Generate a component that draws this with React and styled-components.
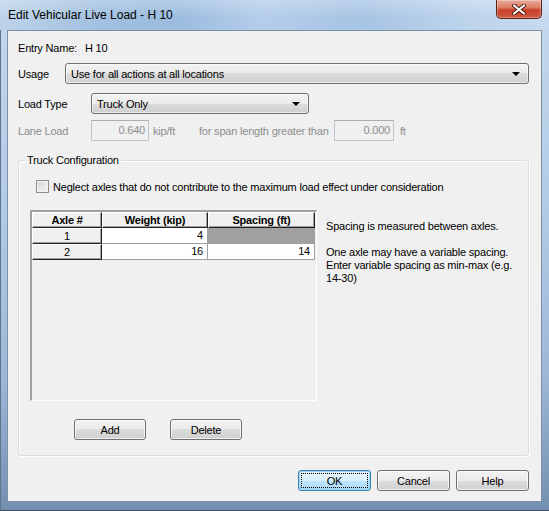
import React from "react";
import styled, { createGlobalStyle } from "styled-components";

const GlobalStyle = createGlobalStyle`
  html, body {
    margin: 0;
    padding: 0;
  }
  body {
    width: 549px;
    height: 511px;
    overflow: hidden;
    background: #ffffff;
    font-family: "Liberation Sans", Arial, sans-serif;
    font-size: 11px;
    letter-spacing: -0.2px;
    color: #000;
  }
`;

const Frame = styled.div`
  width: 549px;
  height: 511px;
  box-sizing: border-box;
  display: flex;
  flex-direction: column;
  padding: 0 7px 8px 7px;
  border-bottom: 1px solid #3e4e62;
  background: linear-gradient(to bottom, #c4d8ee 0%, #b2cbe6 40%, #9cb7d6 75%, #7390b1 100%);
  box-shadow: inset 1px 0 0 #5f7590;
`;

const TitleBar = styled.div`
  height: 30px;
  flex: none;
  display: flex;
  justify-content: space-between;
  align-items: flex-start;
  margin: 0 -7px;
  padding: 0 7px 0 7px;
  background:
    linear-gradient(to bottom, rgba(255, 255, 255, 0.25), rgba(255, 255, 255, 0) 60%),
    linear-gradient(to right, #bdd3ea 0%, #a2c0e0 18%, #9bbcde 32%, #b4cdea 48%, #a6c4e3 66%, #bcd3ec 84%, #c6daef 100%);
`;

const Caption = styled.div`
  font-size: 12px;
  letter-spacing: 0;
  line-height: 16px;
  padding-top: 7px;
  padding-left: 1px;
  color: #000;
`;

const CloseButton = styled.div`
  width: 46px;
  height: 19px;
  box-sizing: border-box;
  border: 1px solid #5e2116;
  border-top: none;
  border-radius: 0 0 5px 5px;
  background: linear-gradient(to bottom, #e9ab9b 0%, #dc7c63 42%, #c7402a 56%, #cf5a3e 100%);
  box-shadow: inset 0 0 0 1px rgba(255, 255, 255, 0.3);
  display: flex;
  align-items: center;
  justify-content: center;
`;

const Client = styled.div`
  flex: 1;
  display: flex;
  flex-direction: column;
  background: #f0f0f0;
  border: 1px solid #7d8fa3;
  padding: 10px 12px 0 10px;
`;

const Row = styled.div`
  display: flex;
  align-items: center;
  height: ${(p) => p.h || 21}px;
  margin-top: ${(p) => p.mt || 0}px;
  color: ${(p) => (p.disabled ? "#8d8d8d" : "#000")};
`;

const Label = styled.div`
  width: ${(p) => p.w}px;
  flex: none;
  white-space: nowrap;
`;

const Combo = styled.div`
  width: ${(p) => p.w}px;
  height: 21px;
  box-sizing: border-box;
  display: flex;
  align-items: center;
  justify-content: space-between;
  padding: 0 8px 0 5px;
  border: 1px solid #707070;
  border-radius: 3px;
  background: linear-gradient(to bottom, #f2f2f2 0%, #ebebeb 50%, #dddddd 50%, #cfcfcf 100%);
  box-shadow: inset 0 0 0 1px rgba(255, 255, 255, 0.6);
`;

const Arrow = styled.span`
  width: 0;
  height: 0;
  border-left: 4px solid transparent;
  border-right: 4px solid transparent;
  border-top: 4px solid #000;
  margin-top: 1px;
`;

const NumBox = styled.div`
  width: ${(p) => p.w}px;
  height: 21px;
  flex: none;
  box-sizing: border-box;
  border: 1px solid #c2c5c9;
  border-top-color: #abadb3;
  background: #f0f0f0;
  text-align: right;
  padding-right: 3px;
  line-height: 19px;
`;

const Unit = styled.div`
  width: ${(p) => p.w}px;
  flex: none;
  padding-left: ${(p) => p.pl || 0}px;
  box-sizing: border-box;
  white-space: nowrap;
`;

const Group = styled.fieldset`
  margin: 13px 0 0 0;
  padding: 0 11px 16px 11px;
  border: 1px solid #d5dfe5;
  border-radius: 3px;
  box-shadow: inset 1px 1px 0 #ffffff, 1px 1px 0 #ffffff;
  height: 302px;
  box-sizing: border-box;
  display: flex;
  flex-direction: column;
`;

const Legend = styled.legend`
  padding: 0 2px;
  margin-left: -5px;
  line-height: 13px;
`;

const CheckRow = styled.label`
  display: flex;
  align-items: center;
  gap: 4px;
  margin: 13px 0 0 6px;
  height: 13px;
`;

const CheckBox = styled.span`
  width: 13px;
  height: 13px;
  box-sizing: border-box;
  border: 1px solid #8f8f8f;
  background: linear-gradient(135deg, #d8d8d8 0%, #f4f4f4 100%);
  box-shadow: inset 0 0 0 1px #f4f4f4;
`;

const Middle = styled.div`
  display: flex;
  gap: 9px;
  margin-top: 17px;
`;

const Grid = styled.div`
  width: 287px;
  height: 191px;
  flex: none;
  box-sizing: border-box;
  border-style: solid;
  border-width: 2px 1px 1px 2px;
  border-color: #a0a0a0 #ffffff #ffffff #a0a0a0;
  background: #f0f0f0;
  display: grid;
  grid-template-columns: 70px 106px 107px;
  grid-auto-rows: 16px;
  align-content: start;
`;

const HeadCell = styled.div`
  box-sizing: border-box;
  border: 1px solid;
  border-color: #ffffff #202020 #202020 #ffffff;
  box-shadow: inset -1px -1px 0 #a0a0a0;
  background: #f0f0f0;
  text-align: center;
  line-height: 14px;
  font-weight: ${(p) => (p.bold ? "bold" : "normal")};
`;

const DataCell = styled.div`
  box-sizing: border-box;
  border-right: 1px solid #a0a0a0;
  border-bottom: 1px solid #a0a0a0;
  background: ${(p) => (p.blank ? "#a0a0a0" : "#ffffff")};
  text-align: right;
  padding-right: 4px;
  line-height: 15px;
`;

const Notes = styled.div`
  padding-top: 10px;
  line-height: 13px;
  white-space: nowrap;
`;

const Para = styled.p`
  margin: 0 0 13px 0;
`;

const ButtonRow = styled.div`
  display: flex;
  gap: ${(p) => p.gap}px;
  justify-content: ${(p) => p.justify || "flex-start"};
  margin: ${(p) => p.m};
`;

const Button = styled.div`
  width: ${(p) => p.w}px;
  height: 21px;
  box-sizing: border-box;
  position: relative;
  border: 1px solid ${(p) => (p.primary ? "#3c7fb1" : "#707070")};
  border-radius: 3px;
  background: ${(p) =>
    p.primary
      ? "linear-gradient(to bottom, #eaf6fd 0%, #d9f0fc 50%, #bee6fd 50%, #a7d9f5 100%)"
      : "linear-gradient(to bottom, #f2f2f2 0%, #ebebeb 50%, #dddddd 50%, #cfcfcf 100%)"};
  box-shadow: inset 0 0 0 1px ${(p) => (p.primary ? "#9fd6f5" : "rgba(255,255,255,0.7)")};
  display: flex;
  align-items: center;
  justify-content: center;
`;

const FocusRing = styled.span`
  position: absolute;
  inset: 2px;
  border: 1px dotted #000;
`;

const Filler = styled.div`
  flex: 1;
`;

const CloseIcon = () => (
  <svg width="14" height="11" viewBox="0 0 14 11">
    <path d="M2 1.5 L12 9.5 M12 1.5 L2 9.5" stroke="#4a1a12" strokeWidth="4" strokeLinecap="round" />
    <path d="M2 1.5 L12 9.5 M12 1.5 L2 9.5" stroke="#ffffff" strokeWidth="2.2" strokeLinecap="round" />
  </svg>
);

const axles = [
  { axle: 1, weight: 4, spacing: null },
  { axle: 2, weight: 16, spacing: 14 },
];

export default function App() {
  return (
    <>
      <GlobalStyle />
      <Frame>
        <TitleBar>
          <Caption>Edit Vehicular Live Load - H 10</Caption>
          <CloseButton>
            <CloseIcon />
          </CloseButton>
        </TitleBar>
        <Client>
          <Row h={13}>
            <Label w={67}>Entry Name:</Label>
            <span>H 10</span>
          </Row>
          <Row mt={9}>
            <Label w={47}>Usage</Label>
            <Combo w={465}>
              <span>Use for all actions at all locations</span>
              <Arrow />
            </Combo>
          </Row>
          <Row mt={9}>
            <Label w={73}>Load Type</Label>
            <Combo w={218}>
              <span>Truck Only</span>
              <Arrow />
            </Combo>
          </Row>
          <Row mt={6} disabled>
            <Label w={73}>Lane Load</Label>
            <NumBox w={58}>0.640</NumBox>
            <Unit w={50} pl={4}>kip/ft</Unit>
            <Unit w={135}>for span length greater than</Unit>
            <NumBox w={60}>0.000</NumBox>
            <Unit w={20} pl={6}>ft</Unit>
          </Row>
          <Group>
            <Legend>Truck Configuration</Legend>
            <CheckRow>
              <CheckBox />
              <span>Neglect axles that do not contribute to the maximum load effect under consideration</span>
            </CheckRow>
            <Middle>
              <Grid>
                <HeadCell bold>Axle #</HeadCell>
                <HeadCell bold>Weight (kip)</HeadCell>
                <HeadCell bold>Spacing (ft)</HeadCell>
                {axles.map((a) => (
                  <React.Fragment key={a.axle}>
                    <HeadCell>{a.axle}</HeadCell>
                    <DataCell>{a.weight}</DataCell>
                    <DataCell blank={a.spacing === null}>{a.spacing}</DataCell>
                  </React.Fragment>
                ))}
              </Grid>
              <Notes>
                <Para>Spacing is measured between axles.</Para>
                <Para>
                  One axle may have a variable spacing.
                  <br />
                  Enter variable spacing as min-max (e.g.
                  <br />
                  14-30)
                </Para>
              </Notes>
            </Middle>
            <ButtonRow gap={24} m="18px 0 0 44px">
              <Button w={72}>Add</Button>
              <Button w={72}>Delete</Button>
            </ButtonRow>
          </Group>
          <Filler />
          <ButtonRow gap={6} justify="flex-end" m="0 0 10px 0">
            <Button w={73} primary>
              <FocusRing />
              OK
            </Button>
            <Button w={73}>Cancel</Button>
            <Button w={73}>Help</Button>
          </ButtonRow>
        </Client>
      </Frame>
    </>
  );
}
